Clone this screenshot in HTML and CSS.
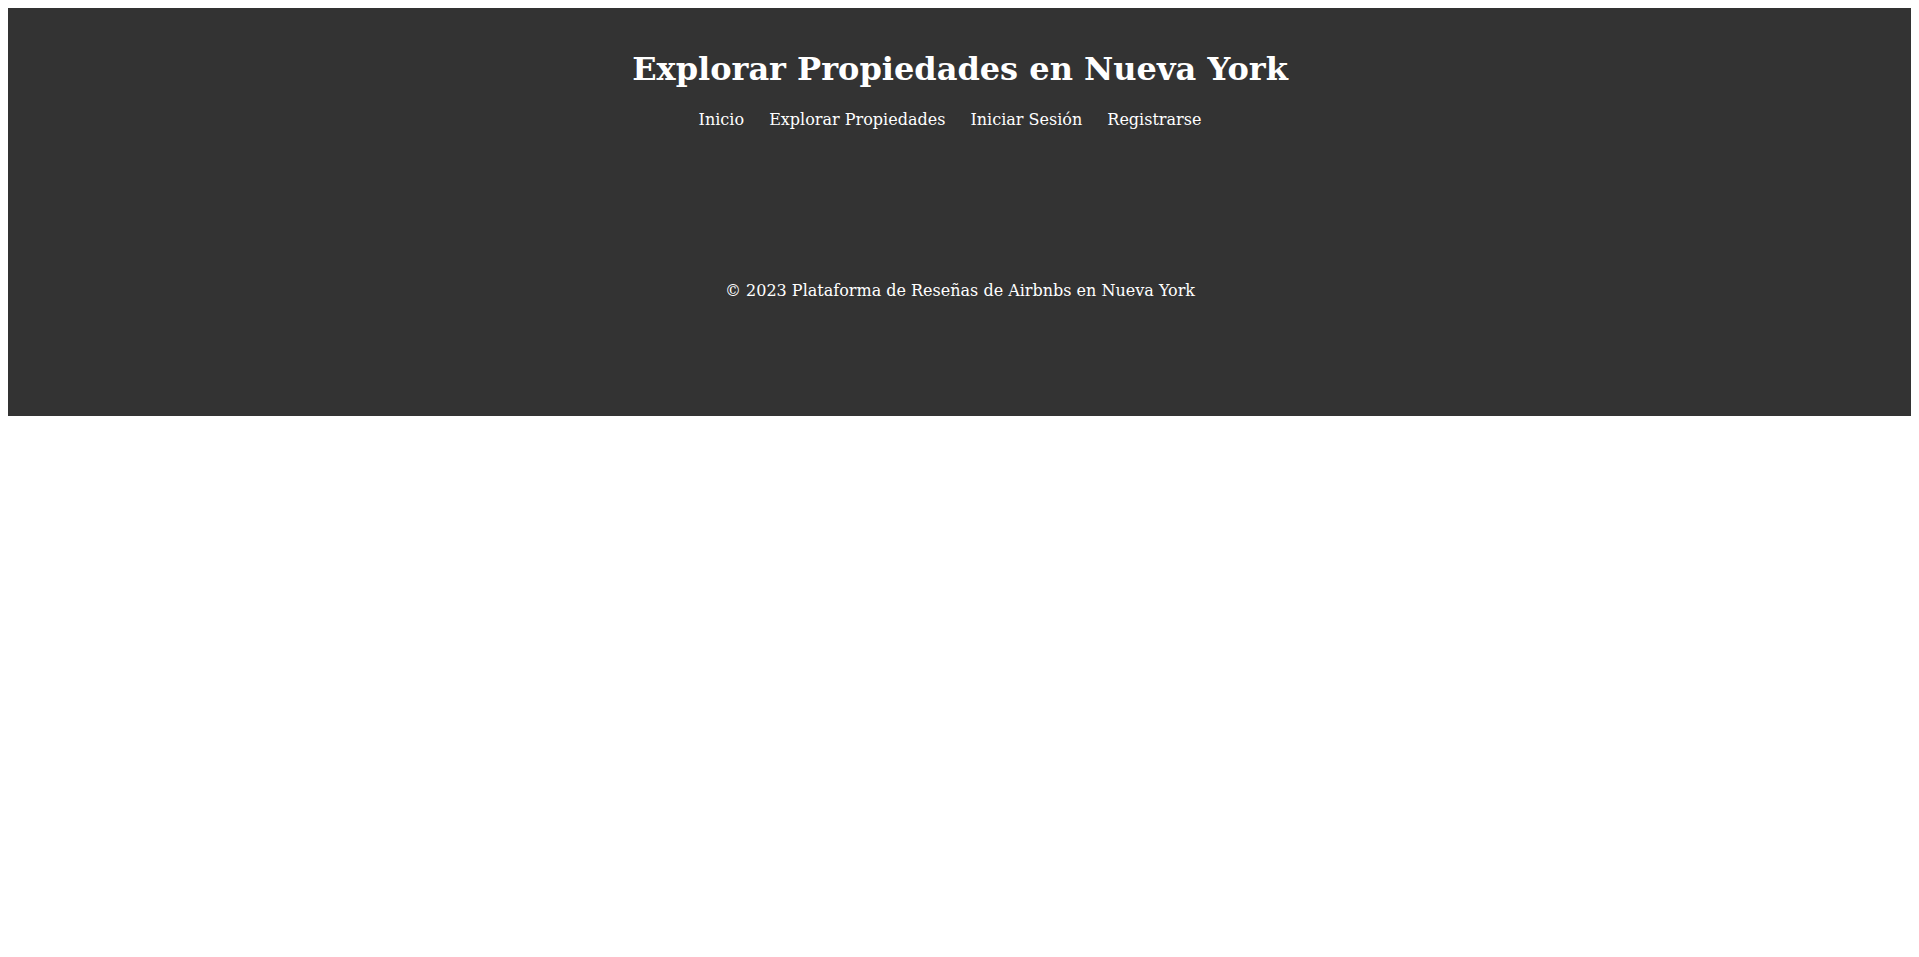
FILE: index.html
```html
<!DOCTYPE html>
<html lang="es">
<head>
<meta charset="utf-8">
<title>Explorar Propiedades en Nueva York</title>
<link rel="stylesheet" href="styles.css">
</head>
<body>
<div class="page">
  <header class="site-header">
    <h1 class="title">Explorar Propiedades en Nueva York</h1>
    <nav class="nav">
      <a href="#">Inicio</a>
      <a href="#">Explorar Propiedades</a>
      <a href="#">Iniciar Sesión</a>
      <a href="#">Registrarse</a>
    </nav>
  </header>
  <main class="content"></main>
  <footer class="site-footer">
    <p>© 2023 Plataforma de Reseñas de Airbnbs en Nueva York</p>
  </footer>
</div>
</body>
</html>
```
FILE: styles.css
```css
body {
  margin: 8px;
  font-family: "DejaVu Serif", serif;
  background: #fff;
}
.page {
  background: #333;
  color: #fff;
  display: flex;
  flex-direction: column;
  height: 408px;
  margin-right: -1px;
}
.site-header {
  text-align: center;
  padding: 20px 0 0;
}
.title {
  font-size: 32px;
  font-weight: bold;
  margin: 22px 0 22px;
}
.nav {
  text-align: center;
}
.nav a {
  color: #fff;
  text-decoration: none;
  font-size: 16px;
  margin-right: 20px;
}
.content {
  height: 130px;
}
.site-footer {
  text-align: center;
  font-size: 16px;
}
.site-footer p {
  margin: 22px 0;
}
```
